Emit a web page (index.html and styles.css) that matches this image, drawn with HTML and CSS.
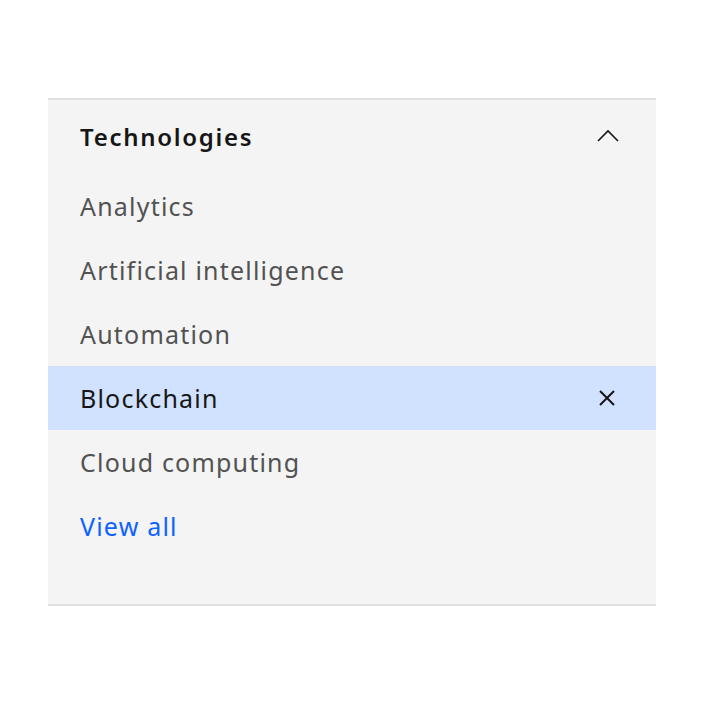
FILE: index.html
```html
<!DOCTYPE html>
<html>
<head>
<meta charset="utf-8">
<link rel="stylesheet" href="styles.css">
</head>
<body>
<div class="page">
  <section class="filter">
    <div class="filter-head">
      <span class="filter-title">Technologies</span>
      <svg class="chev" width="22" height="13" viewBox="0 0 22 13"><path d="M1 12 L11 2 L21 12" fill="none" stroke="#161616" stroke-width="1.6"/></svg>
    </div>
    <ul class="filter-list">
      <li class="item">Analytics</li>
      <li class="item">Artificial intelligence</li>
      <li class="item">Automation</li>
      <li class="item selected">Blockchain
        <svg class="close" width="16" height="16" viewBox="0 0 16 16"><path d="M1 1 L15 15 M15 1 L1 15" fill="none" stroke="#161616" stroke-width="2"/></svg>
      </li>
      <li class="item">Cloud computing</li>
      <li class="item link">View all</li>
    </ul>
  </section>
</div>
</body>
</html>
```
FILE: styles.css
```css
html, body { margin: 0; padding: 0; background: #ffffff; }
body { font-family: "Noto Sans", "Open Sans", sans-serif; }
.page { padding: 98px 48px 0 48px; }
.filter {
  background: #f4f4f4;
  border-top: 2px solid #e0e0e0;
  border-bottom: 2px solid #e0e0e0;
  padding-bottom: 46px;
}
.filter-head {
  height: 74px;
  display: flex;
  align-items: center;
  justify-content: space-between;
  padding: 0 37px 0 32px;
}
.filter-title {
  font-size: 24px;
  font-weight: 600;
  letter-spacing: 1.7px;
  color: #161616;
  margin-top: -2px;
}
.chev { width: 22px; height: 13px; margin-top: -3px; }
.filter-list { list-style: none; margin: 0; padding: 0; }
.item {
  height: 64px;
  display: flex;
  align-items: center;
  justify-content: space-between;
  padding: 0 41px 0 32px;
  font-size: 25px;
  letter-spacing: 1.2px;
  color: #525252;
  line-height: 1;
}
.item.selected { background: #d0e2ff; color: #161616; }
.close { width: 16px; height: 16px; }
.item.link { color: #0f62fe; }
```
